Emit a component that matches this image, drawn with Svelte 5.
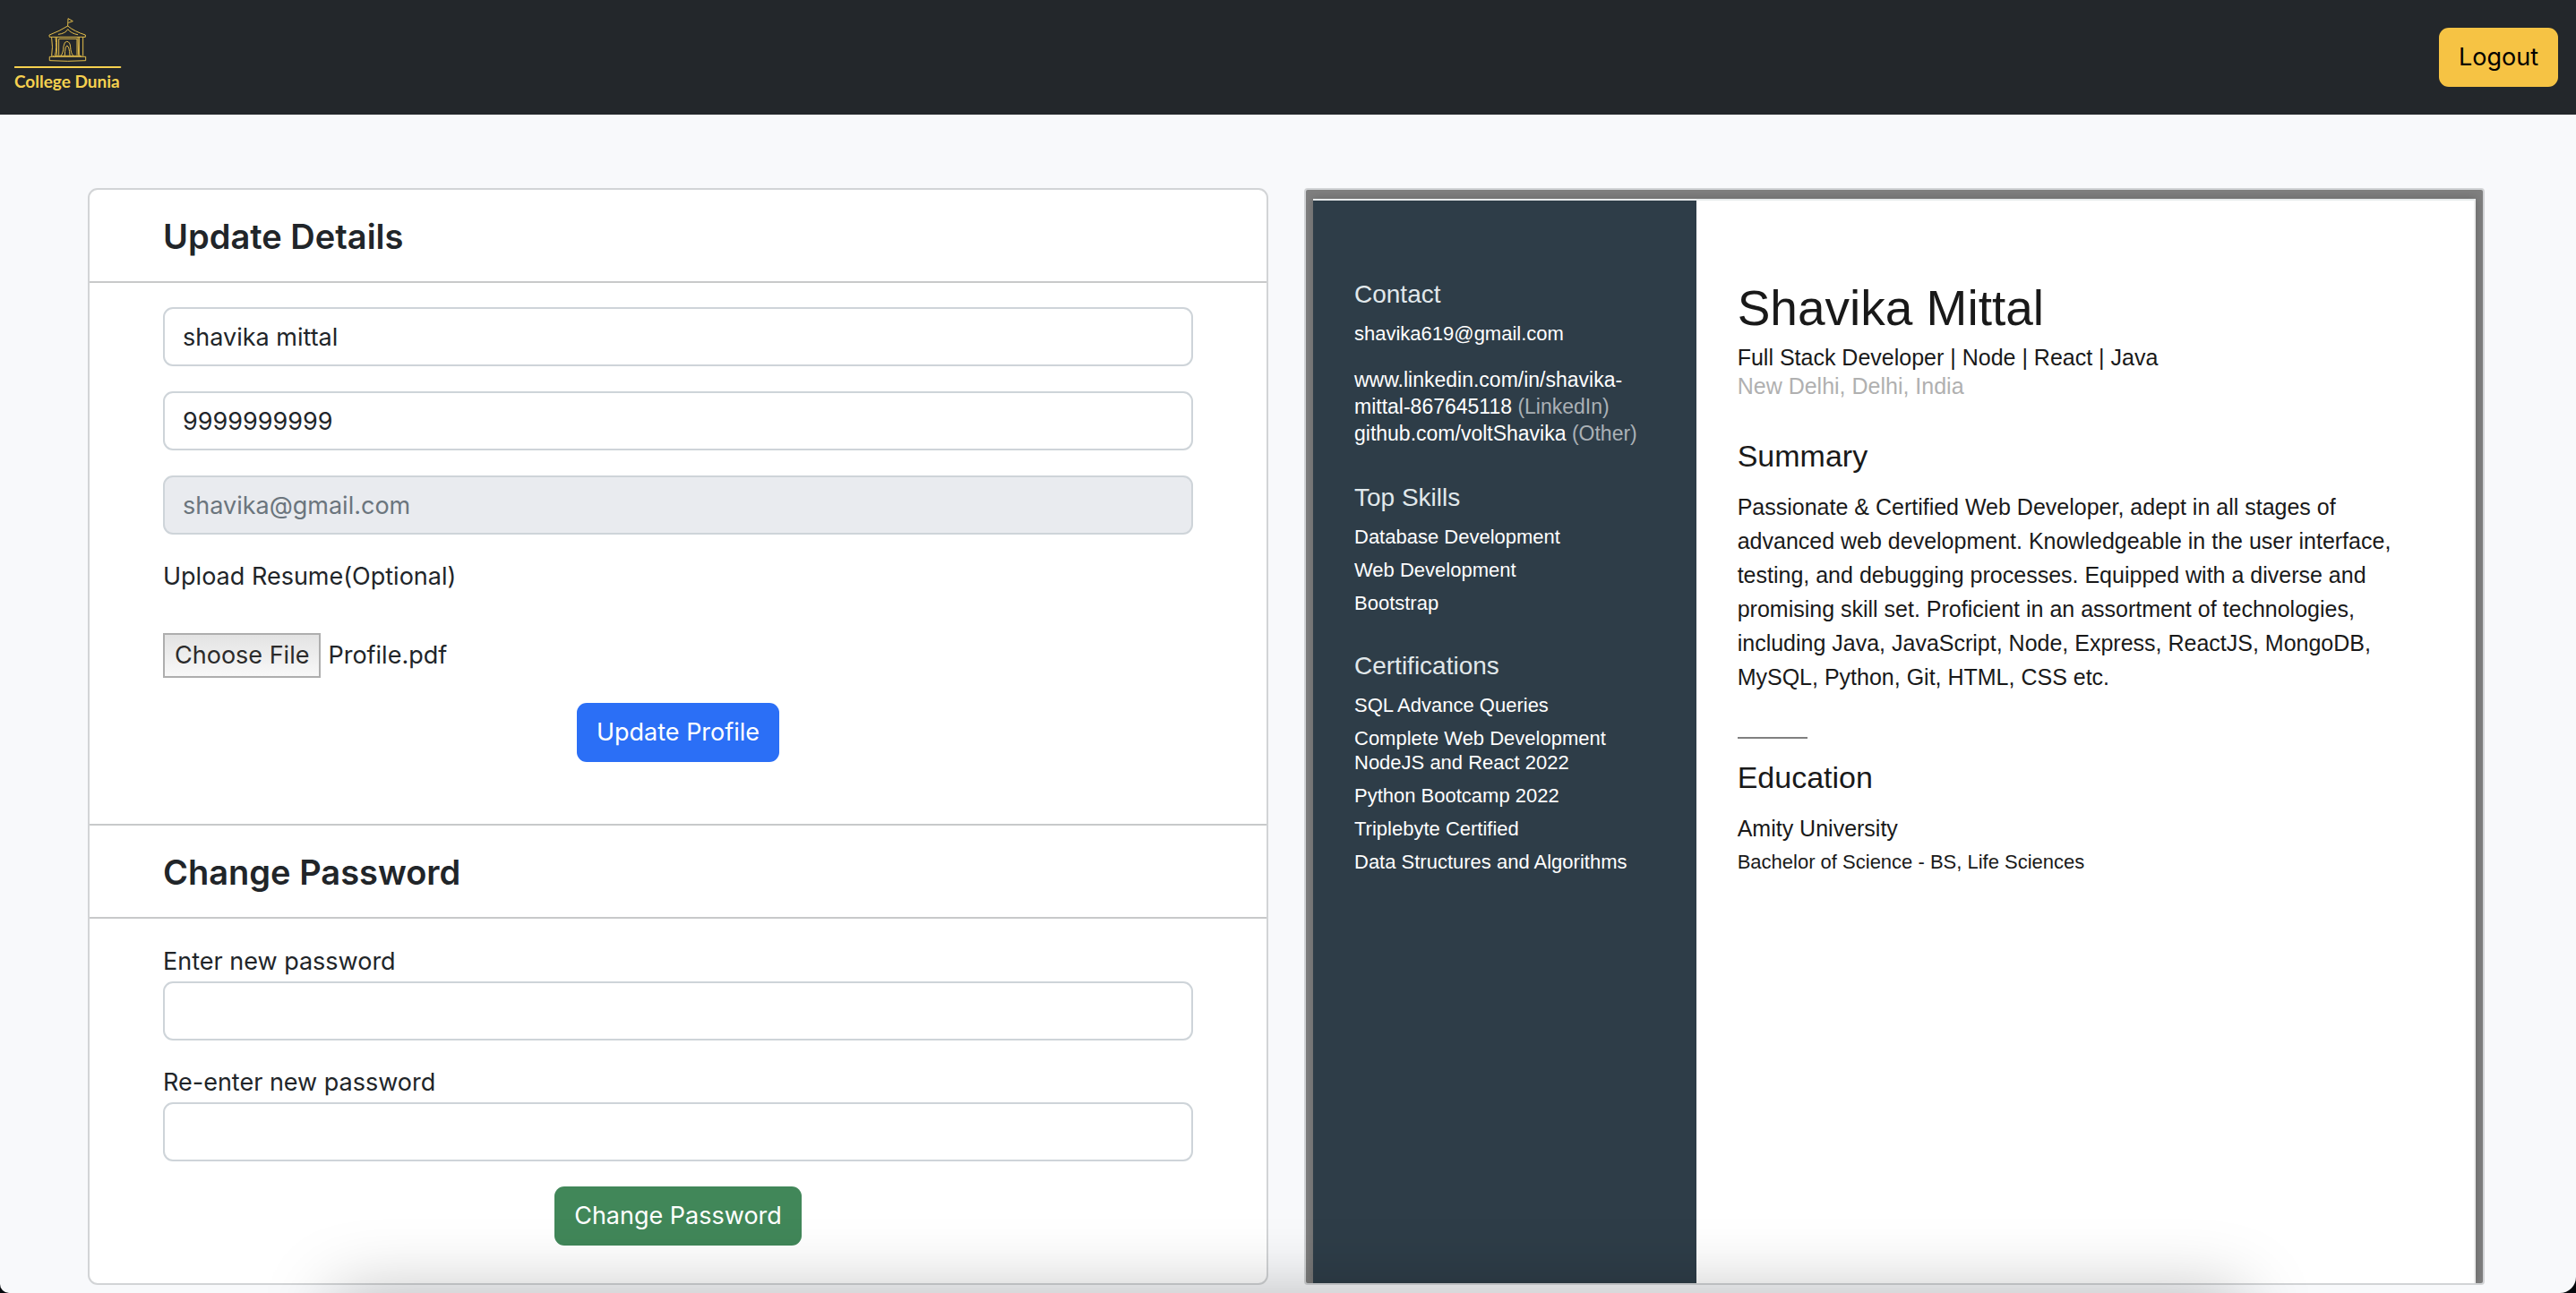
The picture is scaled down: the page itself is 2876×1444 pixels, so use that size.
<script>
  import { onMount } from 'svelte';

  let name = $state('shavika mittal');
  let phone = $state('9999999999');
  let password = $state('');
  let repeated = $state('');
  let picker;

  const skills = ['Database Development', 'Web Development', 'Bootstrap'];
  const certifications = [
    'SQL Advance Queries',
    'Complete Web Development NodeJS and React 2022',
    'Python Bootcamp 2022',
    'Triplebyte Certified',
    'Data Structures and Algorithms'
  ];

  // Show the stored resume as the current choice of the file field.
  onMount(() => {
    const stored = new DataTransfer();
    stored.items.add(new File([''], 'Profile.pdf', { type: 'application/pdf' }));
    picker.files = stored.files;
  });

  const stay = (event) => event.preventDefault();
</script>

<nav class="navbar">
  <a class="brand" href="#home">
    <svg viewBox="48 57 360 177" aria-hidden="true">
      <g fill="none" stroke="#e3bd4b" stroke-width="3" stroke-linecap="round" stroke-linejoin="round">
        <path d="M227 87 L228 62 L244 71 L230 76" />
        <path d="M166 117 Q200 104 227 87 Q250 106 286 117 L286 124 L167 124 Z" />
        <path d="M196 115 Q220 112 227 98 Q238 112 260 116" />
        <path d="M173 126 Q178 158 173 187 M186 126 Q192 160 184 187 M190 126 V187" />
        <path d="M265 126 V187 M278 126 V187 M261 126 L263 184" />
        <path d="M197 184 V130 H258 V184" />
        <path d="M205 185 Q212 178 213 155 Q216 138 224 139 Q235 140 236 158 Q237 178 244 185" />
        <path d="M217 185 Q218 153 225 153 Q232 156 234 185" />
        <path d="M167 190 H287 V203 Q228 207 167 203 Z M176 187 Q182 194 190 187 H272" />
      </g>
      <path d="M50 225 H403" stroke="#f6d14f" stroke-width="6" stroke-linecap="round" />
    </svg>
    <span>College Dunia</span>
  </a>
  <button class="btn logout" type="button">Logout</button>
</nav>

<main class="page">
  <section class="card">
    <header><h1>Update Details</h1></header>
    <form class="details" onsubmit={stay}>
      <input class="field" type="text" aria-label="Name" bind:value={name} />
      <input class="field" type="tel" aria-label="Phone" bind:value={phone} />
      <input class="field" type="email" aria-label="Email" value="shavika@gmail.com" disabled />
      <label for="resume">Upload Resume(Optional)</label>
      <input class="file" id="resume" type="file" bind:this={picker} />
      <button class="btn primary" type="submit">Update Profile</button>
    </form>
    <header class="second"><h1>Change Password</h1></header>
    <form class="password" onsubmit={stay}>
      <div class="group">
        <label for="new-password">Enter new password</label>
        <input class="field" id="new-password" type="password" bind:value={password} />
      </div>
      <div class="group">
        <label for="repeat-password">Re-enter new password</label>
        <input class="field" id="repeat-password" type="password" bind:value={repeated} />
      </div>
      <button class="btn success" type="submit">Change Password</button>
    </form>
  </section>

  <section class="card viewer">
    <article class="resume">
      <aside>
        <section>
          <h3>Contact</h3>
          <p class="mail">shavika619@gmail.com</p>
          <p class="links">
            <a href="#linkedin">www.linkedin.com/in/shavika-<br />mittal-867645118</a> <span>(LinkedIn)</span><br />
            <a href="#github">github.com/voltShavika</a> <span>(Other)</span>
          </p>
        </section>
        <section>
          <h3>Top Skills</h3>
          <ul>
            {#each skills as skill}<li>{skill}</li>{/each}
          </ul>
        </section>
        <section>
          <h3>Certifications</h3>
          <ul>
            {#each certifications as item}<li>{item}</li>{/each}
          </ul>
        </section>
      </aside>
      <div class="content">
        <h2>Shavika Mittal</h2>
        <p class="role">Full Stack Developer | Node | React | Java</p>
        <p class="role place">New Delhi, Delhi, India</p>
        <h3>Summary</h3>
        <p class="text">
          Passionate &amp; Certified Web Developer, adept in all stages of advanced web development.
          Knowledgeable in the user interface, testing, and debugging processes. Equipped with a
          diverse and promising skill set. Proficient in an assortment of technologies, including
          Java, JavaScript, Node, Express, ReactJS, MongoDB, MySQL, Python, Git, HTML, CSS etc.
        </p>
        <hr />
        <h3>Education</h3>
        <p class="text">Amity University</p>
        <p class="text degree">Bachelor of Science - BS, Life Sciences</p>
      </div>
    </article>
  </section>
</main>

<div class="screen-edge"><div class="dock-shadow"></div></div>

<style>
  :global(body) {
    background: #f8f9fb;
    color: #212529;
    font-family: Inter, 'Liberation Sans', sans-serif;
    font-size: 27px;
    line-height: 38px;
  }

  :global(*) {
    box-sizing: border-box;
  }

  h1, h2, h3, p, ul {
    margin: 0;
    padding: 0;
    font-weight: 400;
    list-style: none;
  }

  .navbar {
    display: flex;
    align-items: center;
    justify-content: space-between;
    padding: 19px 20px 19px 16px;
    background: #23272b;
  }

  .brand {
    display: flex;
    flex-direction: column;
    width: 120px;
    padding-bottom: 6px;
    color: #f6d14f;
    font: 700 19px/25px Lato, sans-serif;
    text-decoration: none;
    white-space: nowrap;
  }

  .brand svg {
    width: 120px;
    height: 59px;
  }

  .btn {
    height: 66px;
    padding: 0 22px;
    border: 0;
    border-radius: 11px;
    color: #fff;
    font: inherit;
    cursor: pointer;
  }

  .logout {
    background: #f6c344;
    color: #000;
  }

  .primary {
    background: #2b6ff6;
  }

  .success {
    background: #418759;
  }

  .page {
    display: grid;
    grid-template-columns: 1fr 1fr;
    gap: 40px;
    padding: 82px 102px 9px 98px;
  }

  .card {
    border: 2px solid #d2d4d6;
    border-radius: 11px;
    background: #fff;
  }

  header {
    padding: 28px 82px 26px;
    border-bottom: 2px solid #c8c9ca;
  }

  .second {
    border-top: 2px solid #c8c9ca;
  }

  h1 {
    font-size: 38px;
    font-weight: 600;
    line-height: 48px;
  }

  form {
    display: flex;
    flex-direction: column;
  }

  .details {
    gap: 28px;
    padding: 27px 82px 69px;
  }

  .password {
    gap: 28px;
    padding: 29px 82px 42px;
  }

  form .btn {
    align-self: center;
  }

  .group {
    display: flex;
    flex-direction: column;
    gap: 3px;
  }

  .field {
    width: 100%;
    height: 66px;
    padding: 0 20px;
    border: 2px solid #ced4d9;
    border-radius: 11px;
    background: #fff;
    color: #212529;
    font: inherit;
  }

  .field:disabled {
    background: #e9ebef;
    color: #6b757d;
  }

  .file {
    height: 50px;
    margin-top: 16px;
    color: #212529;
    font: inherit;
  }

  .file::file-selector-button {
    height: 50px;
    margin: 0 8px 0 0;
    padding: 0 11px;
    border: 2px solid #aeaeae;
    border-radius: 0;
    background: linear-gradient(#e3e3e3, #f8f8f8);
    color: #2b2b2b;
    font: inherit;
  }

  .viewer {
    display: flex;
    padding: 10px 8px 0;
    border-radius: 4px;
    background: #7f7f7f;
    overflow: hidden;
  }

  .resume {
    display: grid;
    flex: 1;
    grid-template-columns: 33% 1fr;
    border-top: 2px solid #e6eaeb;
    border-right: 2px solid #eee;
    background: #fff;
    box-shadow: 0 0 10px rgb(0 0 0 / 20%);
    color: #191919;
    font-family: 'Liberation Sans', Arial, sans-serif;
  }

  aside {
    display: flex;
    flex-direction: column;
    gap: 41px;
    padding: 89px 46px 46px;
    background: #2e3d48;
    color: #fff;
    font-size: 22px;
    line-height: 27px;
  }

  aside h3 {
    margin-bottom: 14px;
    color: #e1e8eb;
    font-size: 28px;
    line-height: 32px;
  }

  .links {
    margin-top: 23px;
    font-size: 23px;
    line-height: 30px;
    white-space: nowrap;
  }

  .links a {
    color: inherit;
    text-decoration: none;
  }

  .links span {
    color: #abb1b6;
  }

  aside ul {
    display: flex;
    flex-direction: column;
    gap: 10px;
  }

  .content {
    padding: 88px 60px 46px 46px;
  }

  .content h2 {
    margin-bottom: 7px;
    font-size: 55px;
    line-height: 64px;
  }

  .content h3 {
    margin-bottom: 19px;
    font-size: 34px;
    line-height: 38px;
  }

  .role {
    font-size: 25px;
    line-height: 32px;
  }

  .place {
    margin-bottom: 43px;
    color: #b0b0b0;
  }

  .text {
    font-size: 25px;
    line-height: 38px;
  }

  .degree {
    font-size: 22px;
  }

  hr {
    width: 78px;
    height: 2px;
    margin: 48px 0 24px;
    border: 0;
    background: #808080;
  }

  /* Rounded lower corners of the window and the soft shade above the dock. */
  .screen-edge {
    position: fixed;
    inset: 0;
    overflow: hidden;
    border-radius: 0 0 18px 10px;
    box-shadow: 0 0 0 20px #05080c;
    pointer-events: none;
  }

  .dock-shadow {
    position: absolute;
    top: 100%;
    right: 13%;
    left: 13%;
    height: 100px;
    box-shadow: 0 0 80px rgb(0 0 0 / 26%);
  }
</style>
